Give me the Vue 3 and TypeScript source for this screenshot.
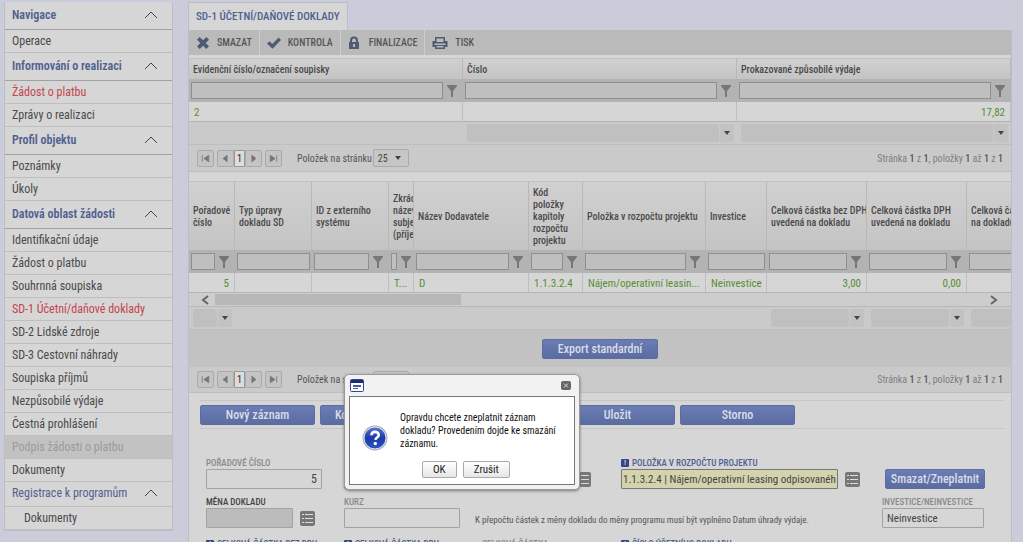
<script setup lang="ts">
interface NavItem {
  label: string
  kind: 'head' | 'item' | 'sub' | 'subitem'
  state?: 'active' | 'disabled'
}
interface Column {
  label: string
  value: string
  width: number
  filter?: boolean
  right?: boolean
  total?: boolean
}

const nav: NavItem[] = [
  { label: 'Navigace', kind: 'head' },
  { label: 'Operace', kind: 'item' },
  { label: 'Informování o realizaci', kind: 'head' },
  { label: 'Žádost o platbu', kind: 'item', state: 'active' },
  { label: 'Zprávy o realizaci', kind: 'item' },
  { label: 'Profil objektu', kind: 'head' },
  { label: 'Poznámky', kind: 'item' },
  { label: 'Úkoly', kind: 'item' },
  { label: 'Datová oblast žádosti', kind: 'head' },
  { label: 'Identifikační údaje', kind: 'item' },
  { label: 'Žádost o platbu', kind: 'item' },
  { label: 'Souhrnná soupiska', kind: 'item' },
  { label: 'SD-1 Účetní/daňové doklady', kind: 'item', state: 'active' },
  { label: 'SD-2 Lidské zdroje', kind: 'item' },
  { label: 'SD-3 Cestovní náhrady', kind: 'item' },
  { label: 'Soupiska příjmů', kind: 'item' },
  { label: 'Nezpůsobilé výdaje', kind: 'item' },
  { label: 'Čestná prohlášení', kind: 'item' },
  { label: 'Podpis žádosti o platbu', kind: 'item', state: 'disabled' },
  { label: 'Dokumenty', kind: 'item' },
  { label: 'Registrace k programům', kind: 'sub' },
  { label: 'Dokumenty', kind: 'subitem' },
]

const summary: Column[] = [
  { label: 'Evidenční číslo/označení soupisky', value: '2', width: 0, filter: true },
  { label: 'Číslo', value: '', width: 0, filter: true, total: true },
  { label: 'Prokazované způsobilé výdaje', value: '17,82', width: 0, filter: true, right: true, total: true },
]

const columns: Column[] = [
  { label: 'Pořadové číslo', value: '5', width: 46, filter: true, right: true, total: true },
  { label: 'Typ úpravy dokladu SD', value: '', width: 77 },
  { label: 'ID z externího systému', value: '', width: 77, filter: true },
  { label: 'Zkrácený název subjektu (příjemce)', value: 'T...', width: 25, filter: true },
  { label: 'Název Dodavatele', value: 'D', width: 115, filter: true },
  { label: 'Kód\npoložky kapitoly rozpočtu projektu', value: '1.1.3.2.4', width: 54, filter: true },
  { label: 'Položka v rozpočtu projektu', value: 'Nájem/operativní leasin...', width: 123, filter: true },
  { label: 'Investice', value: 'Neinvestice', width: 61 },
  { label: 'Celková\u00a0částka\u00a0bez\u00a0DPH uvedená\u00a0na\u00a0dokladu', value: '3,00', width: 100, filter: true, right: true, total: true },
  { label: 'Celková\u00a0částka\u00a0DPH uvedená\u00a0na\u00a0dokladu', value: '0,00', width: 100, filter: true, right: true, total: true },
  { label: 'Celková\u00a0částka\u00a0uvedená na\u00a0dokladu', value: '', width: 100, filter: true, right: true, total: true },
]

const actions = ['Nový záznam', 'Kopírovat záznam', 'Smazat', 'Uložit', 'Storno']
const pagerPaths = ['M4 4v8M12 4v8L6 8z', 'M10 4v8L5 8z', 'M6 4v8l5-4z', 'M4 4v8l6-4zM12 4v8']
const pagerNames = ['První', 'Předchozí', 'Další', 'Poslední']
</script>

<template>
  <div class="page">
    <nav class="sidebar">
      <template v-for="(n, i) in nav" :key="i">
        <button v-if="n.kind === 'head' || n.kind === 'sub'" class="nav-head" :class="{ light: n.kind === 'sub' }" type="button">
          <span>{{ n.label }}</span>
          <svg class="chevron" width="14" height="8" viewBox="0 0 14 8"><path d="M1 7l6-6 6 6" /></svg>
        </button>
        <a v-else class="nav-item" :class="[n.state, { indented: n.kind === 'subitem' }]" href="#">{{ n.label }}</a>
      </template>
    </nav>

    <main class="main">
      <h1 class="tab">SD-1 ÚČETNÍ/DAŇOVÉ DOKLADY</h1>
      <div class="panel">
        <div class="toolbar">
          <button class="tool" type="button">
            <svg width="14" height="14" viewBox="0 0 14 14"><path d="M3.700 1L7 4.300 10.300 1 13 3.700 9.700 7 13 10.300 10.300 13 7 9.700 3.700 13 1 10.300 4.300 7 1 3.700z" /></svg>
            <span>SMAZAT</span>
          </button>
          <button class="tool" type="button">
            <svg width="14" height="14" viewBox="0 0 14 14"><path d="M0 7.500l2.600-2.300L5.300 8 11.700 1.500 14 4 5.500 12.800z" /></svg>
            <span>KONTROLA</span>
          </button>
          <button class="tool" type="button">
            <svg width="14" height="14" viewBox="0 0 14 14"><path fill-rule="evenodd" d="M1 6h1V4.500a4 4 0 018 0V6h1v7H1zM4 6h4V4.500a2 2 0 00-4 0zM5 8v3h2V8z" /></svg>
            <span>FINALIZACE</span>
          </button>
          <button class="tool" type="button">
            <svg width="16" height="14" viewBox="0 0 16 14"><path fill-rule="evenodd" d="M3 1h10v4h2.500v6H13v2H3v-2H.5V5H3zM4.500 2.500V6h7V2.500zM2.500 7.500h11V9h-11zM4.500 10v1.500h7V10z" /></svg>
            <span>TISK</span>
          </button>
        </div>

        <table class="grid summary">
          <thead>
            <tr><th v-for="c in summary" :key="c.label" scope="col">{{ c.label }}</th></tr>
            <tr class="filters">
              <td v-for="c in summary" :key="c.label">
                <div class="filter">
                  <input type="text" :aria-label="c.label" />
                  <svg width="12" height="12" viewBox="0 0 12 12"><path d="M1 0h10v1L7 6v6H5V6L1 1z" /></svg>
                </div>
              </td>
            </tr>
          </thead>
          <tbody>
            <tr><td v-for="c in summary" :key="c.label" :class="{ right: c.right }">{{ c.value }}</td></tr>
          </tbody>
        </table>
        <div class="totals thirds">
          <div v-for="c in summary" :key="c.label" class="total">
            <template v-if="c.total">
              <input type="text" :aria-label="'Souhrn: ' + c.label" />
              <button type="button" aria-label="Vybrat souhrn"><i class="caret"></i></button>
            </template>
          </div>
        </div>

        <div class="pager">
          <template v-for="(p, i) in pagerPaths" :key="p">
            <button class="page-btn" :class="'p' + i" type="button" :aria-label="pagerNames[i]">
              <svg width="16" height="16" viewBox="0 0 16 16"><path :d="p" /></svg>
            </button>
            <span v-if="i === 1" class="current">1</span>
          </template>
          <label for="size-top">Položek na stránku</label>
          <span class="select"><select id="size-top"><option>25</option></select><i class="caret"></i></span>
          <span class="info">Stránka <b>1</b> z <b>1</b>, položky <b>1</b> až <b>1</b> z <b>1</b></span>
        </div>

        <div class="scroll">
          <table class="grid detail">
            <colgroup><col v-for="c in columns" :key="c.label" :style="{ width: c.width + 'px' }" /></colgroup>
            <thead>
              <tr><th v-for="c in columns" :key="c.label" scope="col">{{ c.label }}</th></tr>
              <tr class="filters">
                <td v-for="c in columns" :key="c.label">
                  <div class="filter">
                    <input type="text" :aria-label="c.label" />
                    <svg v-if="c.filter" width="12" height="12" viewBox="0 0 12 12"><path d="M1 0h10v1L7 6v6H5V6L1 1z" /></svg>
                  </div>
                </td>
              </tr>
            </thead>
            <tbody>
              <tr><td v-for="c in columns" :key="c.label" :class="{ right: c.right }">{{ c.value }}</td></tr>
            </tbody>
          </table>
        </div>
        <div class="scrollbar">
          <svg width="8" height="10" viewBox="0 0 8 10"><path d="M7 1L2 5l5 4" /></svg>
          <div class="track"><div class="thumb"></div></div>
          <svg width="8" height="10" viewBox="0 0 8 10"><path d="M1 1l5 4-5 4" /></svg>
        </div>
        <div class="totals">
          <div v-for="c in columns" :key="c.label" class="total" :style="{ width: c.width + 'px' }">
            <template v-if="c.total">
              <input type="text" :aria-label="'Souhrn: ' + c.label" />
              <button type="button" aria-label="Vybrat souhrn"><i class="caret"></i></button>
            </template>
          </div>
        </div>

        <div class="export"><button class="blue" type="button">Export standardní</button></div>

        <div class="pager second">
          <template v-for="(p, i) in pagerPaths" :key="p">
            <button class="page-btn" :class="'p' + i" type="button" :aria-label="pagerNames[i]">
              <svg width="16" height="16" viewBox="0 0 16 16"><path :d="p" /></svg>
            </button>
            <span v-if="i === 1" class="current">1</span>
          </template>
          <label for="size-bottom">Položek na stránku</label>
          <span class="select"><select id="size-bottom"><option>25</option></select><i class="caret"></i></span>
          <span class="info">Stránka <b>1</b> z <b>1</b>, položky <b>1</b> až <b>1</b> z <b>1</b></span>
        </div>

        <div class="actions">
          <button v-for="a in actions" :key="a" class="blue" type="button">{{ a }}</button>
        </div>

        <form class="form" @submit.prevent>
          <div class="field">
            <label for="order">POŘADOVÉ ČÍSLO</label>
            <div class="line"><input id="order" class="right medium" type="text" value="5" /></div>
          </div>
          <div class="field wide">
            <label for="supplier">NÁZEV DODAVATELE</label>
            <div class="line">
              <input id="supplier" class="grow" type="text" />
              <button class="list" type="button" aria-label="Vybrat ze seznamu">
                <svg width="11" height="9" viewBox="0 0 11 9"><path d="M0 0h2v1H0zM3 0h8v1H3zM0 4h2v1H0zM3 4h8v1H3zM0 8h2v1H0zM3 8h8v1H3z" /></svg>
              </button>
            </div>
          </div>
          <div class="field">
            <label for="budget" class="required"><i class="mark">!</i>POLOŽKA V ROZPOČTU PROJEKTU</label>
            <div class="line">
              <input id="budget" class="long yellow" type="text" value="1.1.3.2.4 | Nájem/operativní leasing odpisovaného majetku" />
              <button class="list" type="button" aria-label="Vybrat ze seznamu">
                <svg width="11" height="9" viewBox="0 0 11 9"><path d="M0 0h2v1H0zM3 0h8v1H3zM0 4h2v1H0zM3 4h8v1H3zM0 8h2v1H0zM3 8h8v1H3z" /></svg>
              </button>
            </div>
          </div>
          <div class="field bottom"><button class="blue remove" type="button">Smazat/Zneplatnit</button></div>

          <div class="field">
            <label for="currency" class="dark">MĚNA DOKLADU</label>
            <div class="line">
              <input id="currency" class="short grey" type="text" />
              <button class="list" type="button" aria-label="Vybrat ze seznamu">
                <svg width="11" height="9" viewBox="0 0 11 9"><path d="M0 0h2v1H0zM3 0h8v1H3zM0 4h2v1H0zM3 4h8v1H3zM0 8h2v1H0zM3 8h8v1H3z" /></svg>
              </button>
            </div>
          </div>
          <div class="field">
            <label for="rate">KURZ</label>
            <div class="line"><input id="rate" class="medium" type="text" /></div>
          </div>
          <p class="note">K přepočtu částek z měny dokladu do měny programu musí být vyplněno Datum úhrady výdaje.</p>
          <div class="field">
            <label for="invest">INVESTICE/NEINVESTICE</label>
            <div class="line"><input id="invest" class="kind" type="text" value="Neinvestice" /></div>
          </div>

          <div class="field last"><label for="net" class="required"><i class="mark">!</i>CELKOVÁ ČÁSTKA BEZ DPH</label><input id="net" type="text" /></div>
          <div class="field last"><label for="vat" class="required"><i class="mark">!</i>CELKOVÁ ČÁSTKA DPH</label><input id="vat" type="text" /></div>
          <div class="field last shifted"><label for="gross">CELKOVÁ ČÁSTKA</label><input id="gross" type="text" /></div>
          <div class="field last"><label for="docno" class="required"><i class="mark">!</i>ČÍSLO ÚČETNÍHO DOKLADU</label><input id="docno" type="text" /></div>
        </form>
      </div>
    </main>

    <div class="dialog" role="dialog" aria-labelledby="dialog-text">
      <div class="dialog-title">
        <svg width="14" height="13" viewBox="0 0 14 13">
          <rect x=".5" y=".5" width="13" height="12" rx="1" fill="#fff" stroke="#33488a" />
          <path d="M1 1h12v3H1z" fill="#17306f" />
          <path d="M3 6h8v2H3zM3 9h5v1H3z" fill="#4b5f9c" />
        </svg>
        <button class="close" type="button" aria-label="Zavřít">
          <svg width="10" height="9" viewBox="0 0 10 9"><rect width="10" height="9" rx="2" fill="#666" /><path d="M3 2.500l4 4M7 2.500l-4 4" stroke="#ddd" /></svg>
        </button>
      </div>
      <div class="dialog-body">
        <svg class="question" width="26" height="26" viewBox="0 0 26 26">
          <defs>
            <linearGradient id="ball" x1="0" y1="0" x2="0" y2="1"><stop offset="0" stop-color="#5575cf" /><stop offset=".5" stop-color="#1c3aa6" /><stop offset="1" stop-color="#2c55cc" /></linearGradient>
          </defs>
          <circle cx="13" cy="13" r="12.500" fill="#a9aeba" />
          <circle cx="13" cy="13" r="11" fill="url(#ball)" stroke="#e6e9f3" />
          <path d="M9.500 10.200c0-4.400 7.200-4.400 7.200-.3 0 2.600-3.200 2.500-3.300 5" fill="none" stroke="#fff" stroke-width="2.600" />
          <circle cx="13.300" cy="18.500" r="1.700" fill="#fff" />
        </svg>
        <div class="dialog-content">
          <p id="dialog-text">Opravdu chcete zneplatnit záznam dokladu? Provedením dojde ke smazání záznamu.</p>
          <div class="dialog-buttons"><button type="button">OK</button><button type="button">Zrušit</button></div>
        </div>
      </div>
    </div>
  </div>
</template>

<style>
body {
  margin: 0;
  overflow: hidden;
  background: #cbccd9;
}
</style>

<style scoped>
.page {
  position: relative;
  display: flex;
  gap: 15px;
  height: 100vh;
  overflow: hidden;
  padding: 2px 11px 0 4px;
  box-sizing: border-box;
  font-family: "Roboto Condensed", Roboto, sans-serif;
  font-size: 12px;
  color: #4a4a4a;
}
.page *, .page *::before {
  box-sizing: border-box;
}
button, input, select {
  font-family: inherit;
  margin: 0;
}
button {
  padding: 0;
  border: 0;
  background: none;
}
.sidebar {
  flex: 0 0 169px;
  align-self: flex-start;
  border: 1px solid #bcbdc6;
  border-top: 0;
  background: #d6d6d6;
}
.nav-head {
  display: flex;
  justify-content: space-between;
  align-items: center;
  width: 100%;
  height: 28px;
  padding: 0 14px 2px 7px;
  border-bottom: 1px solid #a0a0a0;
  color: #50608f;
  font-size: 12px;
  font-weight: 600;
}
.nav-head.light {
  height: 25px;
  font-weight: 400;
  border-color: #bdbdbd;
}
.chevron path {
  fill: none;
  stroke: #444;
}
.nav-item {
  display: block;
  height: 23px;
  padding-left: 7px;
  border-bottom: 1px solid #bfbfbf;
  color: #4a4a4a;
  font-size: 12px;
  line-height: 23px;
  text-decoration: none;
}
.nav-item.active {
  color: #c4444e;
}
.nav-item.disabled {
  background: #c2c2c2;
  color: #9b9b9b;
}
.nav-item.indented {
  padding-left: 19px;
}
.main {
  flex: 1;
  min-width: 0;
}
.tab {
  width: fit-content;
  height: 28px;
  margin: 0;
  padding: 0 7px;
  border: 1px solid #bcbdc6;
  border-bottom: 0;
  background: #d6d6d6;
  color: #50608f;
  font-size: 11px;
  font-weight: 500;
  line-height: 28px;
}
.panel {
  border: 1px solid #bcbdc6;
  border-top: 0;
  background: #d6d6d6;
}
.toolbar {
  display: flex;
  height: 25px;
  margin-bottom: 3px;
  background: #bababa;
}
.tool {
  display: flex;
  align-items: center;
  gap: 7px;
  padding: 0 7px;
  border-right: 1px solid #cdcdcd;
  color: #555;
  font-size: 10px;
  font-weight: 500;
}
.tool:last-child {
  border: 0;
}
.tool svg {
  fill: #4f5b70;
}
.grid {
  width: 100%;
  border-collapse: separate;
  border-spacing: 0;
  table-layout: fixed;
}
.grid th {
  height: 21px;
  padding: 2px 0 0 4px;
  border-top: 1px solid #c2c2c2;
  border-right: 1px solid #b8b8b8;
  background: linear-gradient(#d0d0d0, #c4c4c4);
  font-size: 10px;
  font-weight: 500;
  line-height: 12px;
  text-align: left;
  white-space: pre-line;
  overflow: hidden;
}
.filters td {
  height: 23px;
  padding: 0 2px;
  background: #b3b3b3;
}
.filter {
  display: flex;
  align-items: center;
}
.filter input {
  flex: 1 1 0;
  min-width: 0;
  height: 17px;
  border: 1px solid #8f8f8f;
  background: #bfbfbf;
}
.filter svg {
  flex: 0 0 12px;
  margin: 0 3px;
  fill: #777;
}
.grid tbody td {
  height: 20px;
  padding: 1px 5px 0;
  border-right: 1px solid #bebebe;
  border-bottom: 1px solid #b4b4b4;
  color: #568d34;
  font-size: 11px;
  white-space: nowrap;
  overflow: hidden;
}
.grid tbody .right {
  text-align: right;
}
.totals {
  display: flex;
  height: 23px;
  overflow: hidden;
  background: #cacaca;
  border-bottom: 1px solid #bebebe;
}
.total {
  display: flex;
  flex: 0 0 auto;
  gap: 1px;
  padding: 2px 3px 2px 4px;
}
.thirds .total {
  flex: 1;
}
.total input {
  flex: 1 1 0;
  min-width: 0;
  border: 0;
  border-radius: 2px;
  background: #c0c0c0;
}
.total button {
  display: grid;
  place-items: center;
  flex: 0 0 14px;
  border-radius: 2px;
  background: #c2c2c2;
}
.caret {
  border: 3px solid transparent;
  border-top: 4px solid #444;
  border-bottom: 0;
}
.pager {
  display: flex;
  align-items: center;
  height: 27px;
  padding: 0 8px;
  background: #cacaca;
  border-bottom: 1px solid #bebebe;
  color: #555;
  font-size: 10px;
}
.page-btn {
  width: 17px;
  height: 17px;
  border: 1px solid #aaa;
  border-radius: 2px;
  background: #c4c4c4;
  line-height: 0;
}
.page-btn svg {
  width: 13px;
  height: 13px;
  fill: #777;
  stroke: #777;
  stroke-width: 1;
}
.p0, .p2 {
  margin-right: 3px;
}
.current {
  width: 11px;
  height: 17px;
  border: 1px solid #999;
  background: #dcdcdc;
  color: #333;
  font-size: 11px;
  line-height: 15px;
  text-align: center;
}
.pager label {
  margin: 0 1px 0 15px;
}
.select {
  display: flex;
  align-items: center;
  width: 36px;
  height: 18px;
  padding-right: 7px;
  border: 1px solid #aaa;
  border-radius: 2px;
  background: #c6c6c6;
}
.select select {
  flex: 1;
  min-width: 0;
  padding: 0 0 0 4px;
  appearance: none;
  border: 0;
  background: none;
  color: #444;
  font-size: 10px;
}
.info {
  margin-left: auto;
  color: #808080;
}
.info b {
  color: #555;
  font-weight: 500;
}
.scroll {
  margin-top: 9px;
  overflow: hidden;
}
.detail {
  width: 878px;
}
.detail th {
  height: 69px;
}
.scrollbar {
  display: flex;
  align-items: center;
  height: 14px;
  padding: 0 13px 0 12px;
  border-bottom: 1px solid #b8b8b8;
  background: #cdcdcd;
}
.scrollbar svg {
  fill: none;
  stroke: #666;
  stroke-width: 2;
}
.track {
  flex: 1;
  padding: 0 6px;
}
.thumb {
  width: 32%;
  height: 11px;
  background: #b7b7b7;
}
.export {
  display: flex;
  justify-content: center;
  align-items: center;
  height: 37px;
  background: #c2c2c2;
}
.blue {
  height: 20px;
  border: 1px solid #5b6da1;
  border-radius: 2px;
  background: linear-gradient(#6a7db5, #5a6ca0);
  color: #dadde6;
  font-size: 12px;
  font-weight: 500;
}
.export .blue {
  width: 116px;
}
.pager.second {
  height: 26px;
}
.actions {
  display: flex;
  gap: 5px;
  height: 29px;
  margin: 7px 7px 0 11px;
  padding-top: 4px;
  border-top: 1px solid #c6c6c6;
  border-bottom: 1px solid #c6c6c6;
}
.actions .blue {
  width: 115px;
}
.form {
  display: grid;
  grid-template-columns: 138fr 131fr 146fr 261fr 129fr;
  margin-top: 28px;
  padding-left: 17px;
  row-gap: 7px;
}
.field {
  display: flex;
  flex-direction: column;
  min-width: 0;
}
.field.wide {
  grid-column: span 2;
  padding-right: 30px;
}
.field.bottom {
  justify-content: flex-end;
  align-items: flex-start;
  padding-left: 3px;
}
.field.last {
  padding-top: 3px;
}
.field.shifted {
  padding-left: 7px;
}
.field label {
  display: flex;
  align-items: center;
  gap: 3px;
  height: 12px;
  color: #8a8a8a;
  font-size: 9px;
  font-weight: 500;
  white-space: nowrap;
}
.field label.dark {
  color: #444;
}
.field label.required {
  color: #50608f;
}
.mark {
  width: 8px;
  height: 8px;
  border-radius: 1px;
  background: #33488a;
  color: #ddd;
  font-size: 8px;
  font-style: normal;
  line-height: 8px;
  text-align: center;
}
.field input {
  height: 20px;
  min-width: 0;
  padding: 0 4px;
  border: 1px solid #a2a2a2;
  border-radius: 1px;
  background: #d6d6d6;
  color: #444;
  font-size: 12px;
}
.line {
  display: flex;
  align-items: center;
  gap: 7px;
}
.field .medium {
  width: 116px;
}
.field .short {
  width: 87px;
}
.field .long {
  width: 217px;
  padding: 0 1px;
  border-color: #777;
  font-size: 11px;
}
.field .kind {
  width: 102px;
  font-size: 11px;
}
.field .grow {
  flex: 1;
}
.field .right {
  text-align: right;
}
.field .yellow {
  background: #d3d3ad;
}
.field .grey {
  background: #bcbcbc;
}
.list {
  display: grid;
  place-items: center;
  flex: 0 0 15px;
  height: 15px;
  border-radius: 2px;
  background: #777;
}
.list svg {
  fill: #ddd;
}
.remove {
  width: 100px;
}
.note {
  grid-column: span 2;
  align-self: end;
  margin: 0;
  color: #555;
  font-size: 9px;
  line-height: 16px;
}
.dialog {
  position: absolute;
  left: 344px;
  top: 374px;
  width: 236px;
  padding: 0 4px 4px;
  border: 1px solid #999;
  border-radius: 5px;
  background: #f2f2f2;
  box-shadow: 0 1px 3px #777;
  color: #111;
}
.dialog-title {
  display: flex;
  justify-content: space-between;
  align-items: center;
  height: 21px;
  padding: 0 4px 0 1px;
}
.close {
  line-height: 0;
}
.dialog-body {
  display: flex;
  gap: 12px;
  height: 89px;
  padding: 14px 5px 5px 12px;
  border: 1px solid #777;
  background: #fff;
}
.question {
  flex: 0 0 26px;
  margin-top: 14px;
}
.dialog-content p {
  margin: 0 0 11px;
  font-size: 10px;
  line-height: 13px;
}
.dialog-buttons {
  display: flex;
  gap: 6px;
  padding-left: 22px;
}
.dialog-buttons button {
  height: 17px;
  padding: 0 10px;
  border: 1px solid #aaa;
  border-radius: 2px;
  background: linear-gradient(#fff, #e6e6e6);
  color: #222;
  font-size: 11px;
}
</style>
